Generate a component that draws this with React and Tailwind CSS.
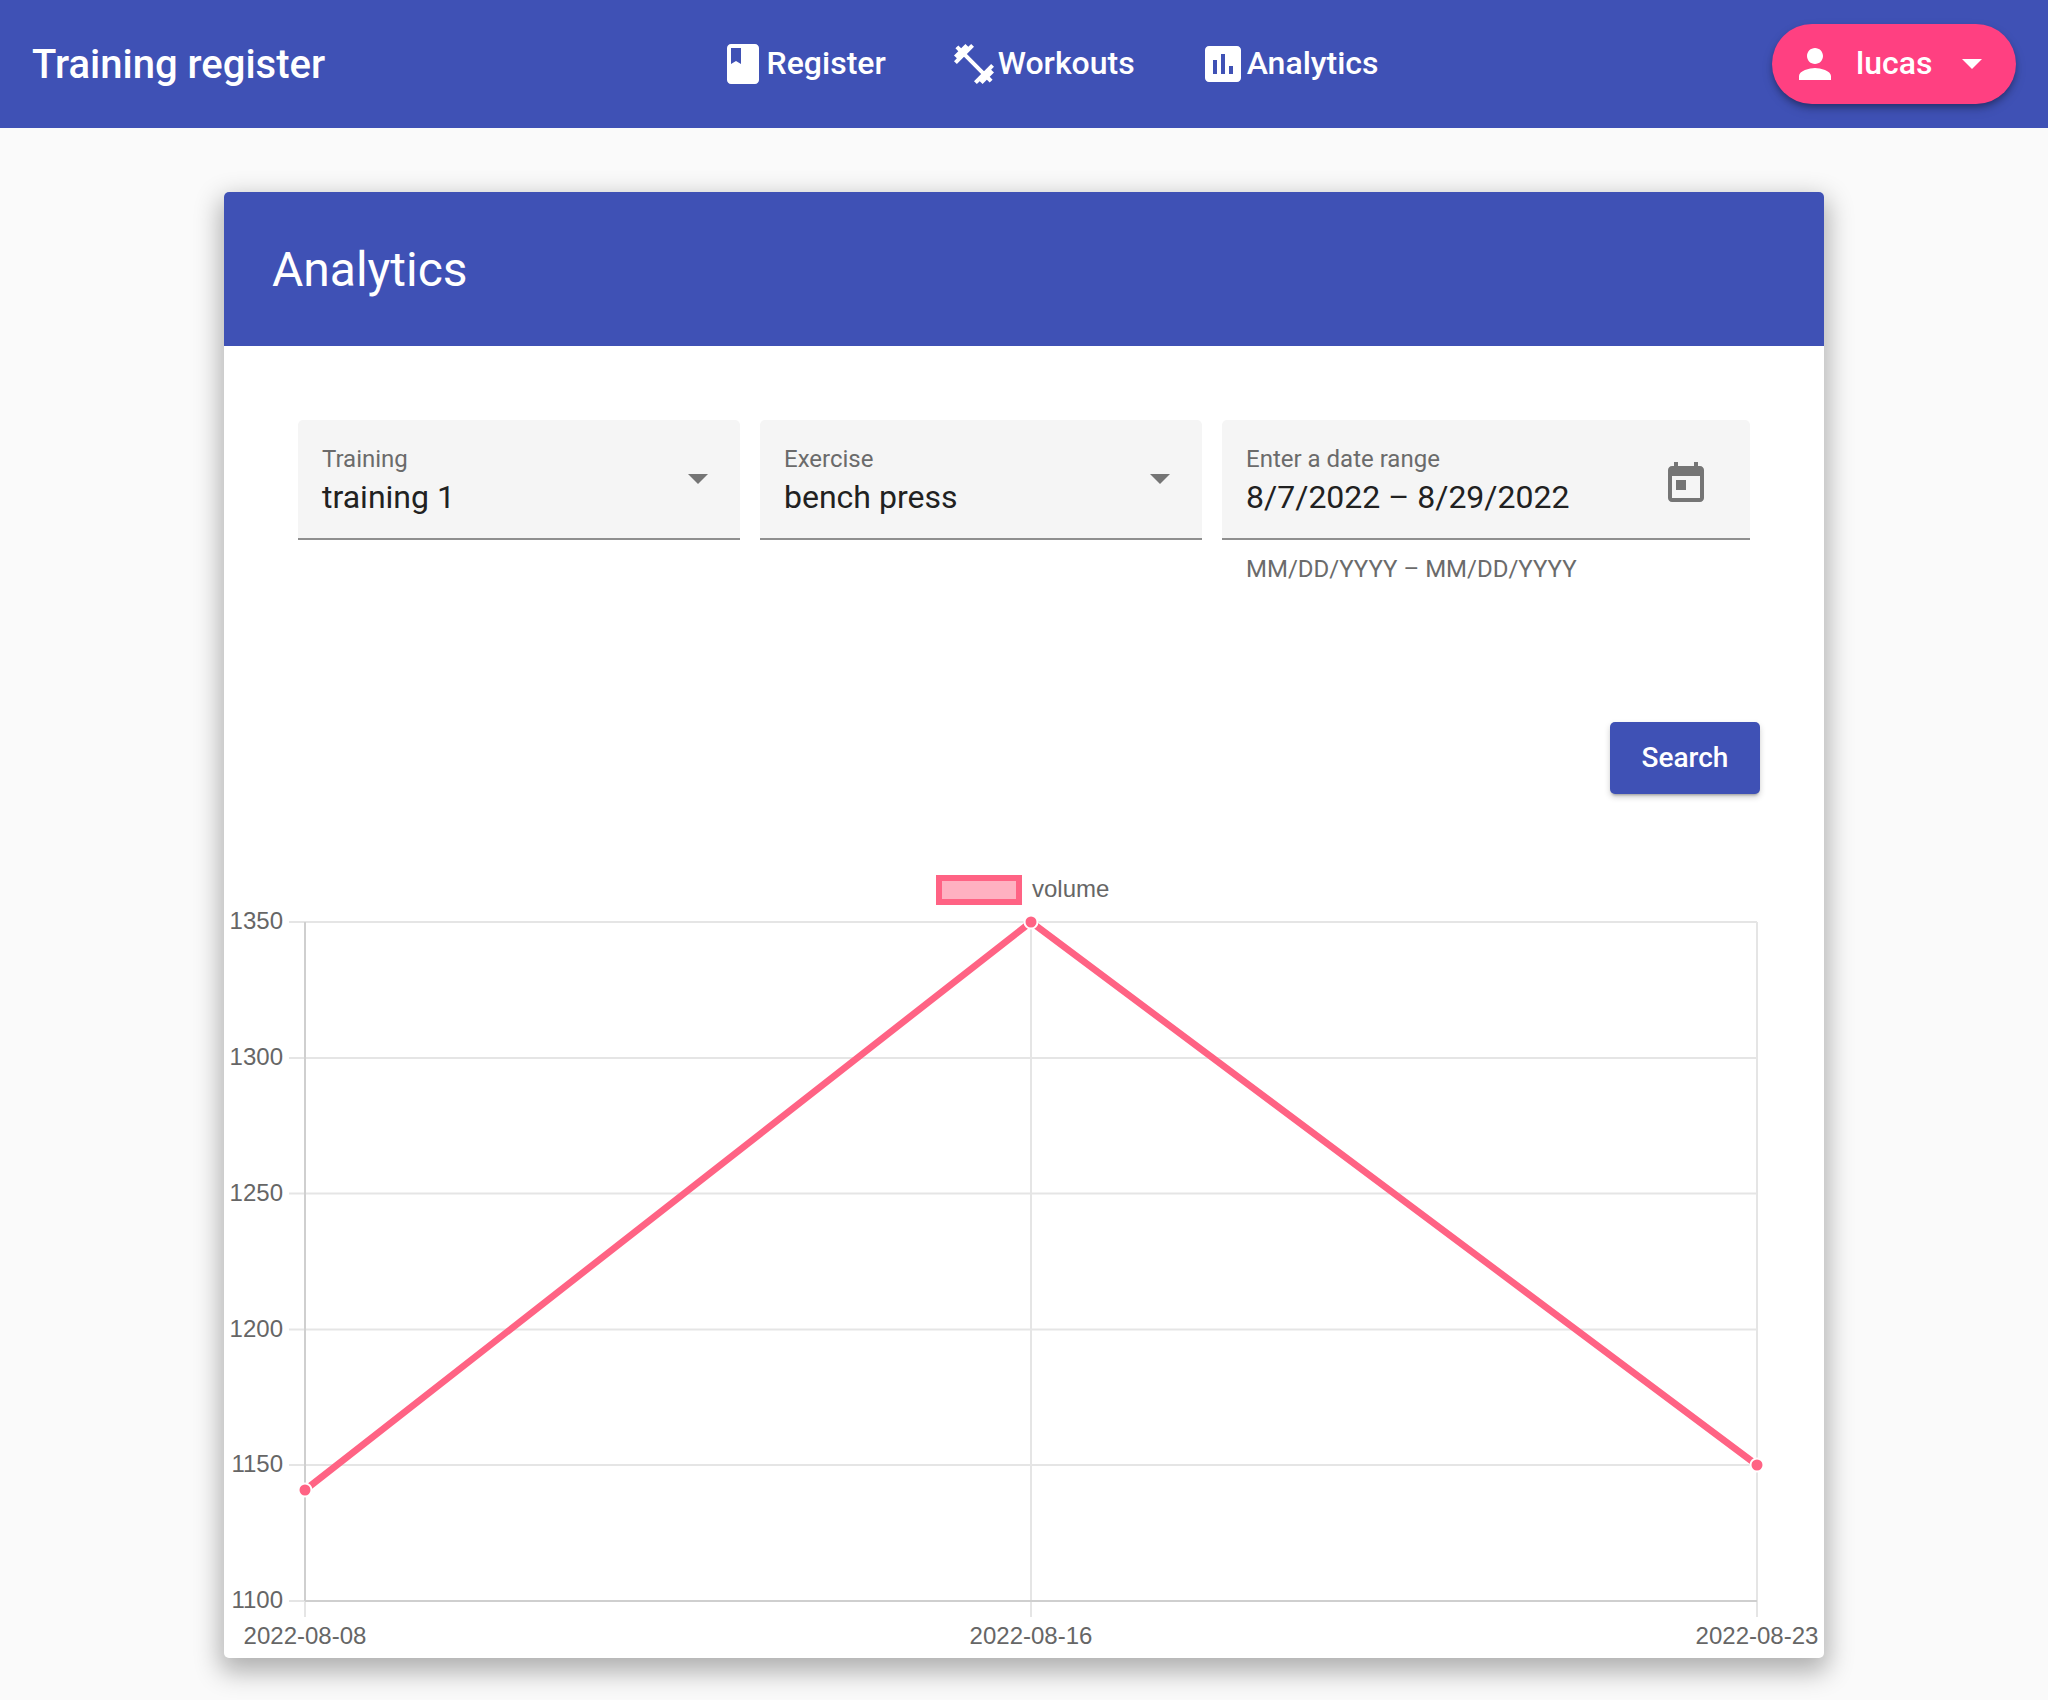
import React from 'react';

const BOOK = 'M18 2H6c-1.1 0-2 .9-2 2v16c0 1.1.9 2 2 2h12c1.1 0 2-.9 2-2V4c0-1.1-.9-2-2-2zM6 4h5v8l-2.5-1.5L6 12V4z';
const DUMBBELL = 'M20.57 14.86L22 13.43 20.57 12 17 15.57 8.43 7 12 3.43 10.57 2 9.14 3.43 7.71 2 5.57 4.14 4.14 2.71 2.71 4.14l1.43 1.43L2 7.71l1.43 1.43L2 10.57 3.43 12 7 8.43 15.57 17 12 20.57 13.43 22l1.43-1.43L16.29 22l2.14-2.14 1.43 1.43 1.43-1.43-1.43-1.43L22 16.29z';
const CHART = 'M19 3H5c-1.1 0-2 .9-2 2v14c0 1.1.9 2 2 2h14c1.1 0 2-.9 2-2V5c0-1.1-.9-2-2-2zM9 17H7v-7h2v7zm4 0h-2V7h2v10zm4 0h-2v-4h2v4z';
const PERSON = 'M12 12c2.21 0 4-1.79 4-4s-1.79-4-4-4-4 1.79-4 4 1.79 4 4 4zm0 2c-2.67 0-8 1.34-8 4v2h16v-2c0-2.66-5.33-4-8-4z';
const EVENT = 'M19 3h-1V1h-2v2H8V1H6v2H5c-1.11 0-1.99.9-1.99 2L3 19c0 1.1.89 2 2 2h14c1.1 0 2-.9 2-2V5c0-1.1-.9-2-2-2zm0 16H5V8h14v11zM7 10h5v5H7z';

function Icon({ d, className }) {
  return (
    <svg viewBox="0 0 24 24" fill="currentColor" className={className}>
      <path d={d} />
    </svg>
  );
}

function NavItem({ icon, label }) {
  return (
    <div className="flex items-center text-[32px] font-medium text-white">
      <Icon d={icon} className="h-12 w-12 shrink-0" />
      <span className="-mt-[2px]">{label}</span>
    </div>
  );
}

function SelectField({ label, value }) {
  return (
    <div className="flex h-[120px] w-[442px] items-center justify-between rounded-t-[5px] border-b-2 border-[#8f8f8f] bg-[#f5f5f5] pl-6 pr-8">
      <div className="mt-[3px] flex flex-col">
        <span className="text-[24px] leading-[28px] text-[#6b6b6b]">{label}</span>
        <span className="mt-[5px] text-[32px] leading-[38px] text-[#212121]">{value}</span>
      </div>
      <div className="h-0 w-0 border-x-[10px] border-t-[10px] border-x-transparent border-t-[#757575]" />
    </div>
  );
}

const X_AXIS = [
  { x: 305, label: '2022-08-08' },
  { x: 1031, label: '2022-08-16' },
  { x: 1757, label: '2022-08-23' },
];
const Y_AXIS = [
  { y: 922, label: '1350' },
  { y: 1058, label: '1300' },
  { y: 1193.5, label: '1250' },
  { y: 1329.5, label: '1200' },
  { y: 1465, label: '1150' },
  { y: 1601, label: '1100' },
];
const POINTS = [
  [305, 1490],
  [1031, 922],
  [1757, 1465],
];

function VolumeChart() {
  return (
    <svg viewBox="224 866 1600 792" className="block h-[792px] w-[1600px] font-['Liberation_Sans',sans-serif]">
      {Y_AXIS.map((t) => (
        <g key={t.label}>
          <line x1="289" x2="1757" y1={t.y} y2={t.y} stroke="#e5e5e5" strokeWidth="2" />
          <text x="283" y={t.y + 7} textAnchor="end" fontSize="24" fill="#666666">{t.label}</text>
        </g>
      ))}
      {X_AXIS.map((t) => (
        <g key={t.label}>
          <line x1={t.x} x2={t.x} y1="922" y2="1617" stroke="#e5e5e5" strokeWidth="2" />
          <text x={t.x} y="1644" textAnchor="middle" fontSize="24" fill="#666666">{t.label}</text>
        </g>
      ))}
      <line x1="305" x2="305" y1="922" y2="1601" stroke="#cfcfcf" strokeWidth="2" />
      <line x1="305" x2="1757" y1="1601" y2="1601" stroke="#cfcfcf" strokeWidth="2" />

      <rect x="939" y="878" width="80" height="24" fill="#ffb1c1" stroke="#ff6384" strokeWidth="6" />
      <text x="1032" y="897" fontSize="24" fill="#666666">volume</text>

      <polyline points={POINTS.map((p) => p.join(',')).join(' ')} fill="none" stroke="#ff6384" strokeWidth="6.67" />
      {POINTS.map((p) => (
        <circle key={p[0]} cx={p[0]} cy={p[1]} r="6.5" fill="#ff6384" stroke="#ffffff" strokeWidth="2" />
      ))}
    </svg>
  );
}

export default function App() {
  return (
    <div className="min-h-[1700px] bg-[#fafafa] font-['Roboto',sans-serif]">
      {/* Toolbar */}
      <header className="flex h-32 items-center justify-between bg-[#3f51b5] pl-8 pr-8">
        <h1 className="mt-[2px] text-[40px] font-medium text-white">Training register</h1>
        <nav className="flex items-center gap-16">
          <NavItem icon={BOOK} label="Register" />
          <NavItem icon={DUMBBELL} label="Workouts" />
          <NavItem icon={CHART} label="Analytics" />
        </nav>
        <button className="flex h-20 w-[244px] items-center rounded-full bg-[#ff4081] pl-[19px] text-[32px] font-medium text-white shadow-[0_4px_6px_-1px_rgba(0,0,0,0.3),0_5px_12px_rgba(0,0,0,0.14)]">
          <Icon d={PERSON} className="h-12 w-12 shrink-0" />
          <span className="-mt-[2px] ml-[17px]">lucas</span>
          <span className="ml-[30px] h-0 w-0 border-x-[10px] border-t-[10px] border-x-transparent border-t-white" />
        </button>
      </header>

      {/* Card */}
      <main className="mx-auto mt-16 w-[1600px] rounded-[5px] bg-white shadow-[0_10px_26px_4px_rgba(0,0,0,0.3)]">
        <div className="flex h-[154px] items-center rounded-t-[5px] bg-[#3f51b5] pl-12">
          <h2 className="mt-[2px] text-[48px] font-normal text-white">Analytics</h2>
        </div>

        <div className="px-[74px] pt-[74px]">
          <div className="flex gap-5">
            <SelectField label="Training" value="training 1" />
            <SelectField label="Exercise" value="bench press" />
            <div className="flex-1">
              <div className="flex h-[120px] items-center justify-between rounded-t-[5px] border-b-2 border-[#8f8f8f] bg-[#f5f5f5] pl-6 pr-[40px]">
                <div className="mt-[3px] flex flex-col">
                  <span className="text-[24px] leading-[28px] text-[#6b6b6b]">Enter a date range</span>
                  <span className="mt-[5px] text-[32px] leading-[38px] text-[#212121]">8/7/2022 – 8/29/2022</span>
                </div>
                <Icon d={EVENT} className="mt-[10px] h-12 w-12 text-[#757575]" />
              </div>
              <p className="mt-4 h-6 pl-6 text-[24px] leading-[26px] text-[#6b6b6b]">MM/DD/YYYY – MM/DD/YYYY</p>
            </div>
          </div>
        </div>

        <div className="mt-[142px] flex justify-end pr-[64px]">
          <button className="h-[72px] w-[150px] rounded-[5px] bg-[#3f51b5] text-[28px] font-medium text-white shadow-[0_3px_3px_-2px_rgba(0,0,0,0.3),0_3px_6px_rgba(0,0,0,0.18)]">
            Search
          </button>
        </div>

        <div className="mt-[72px]">
          <VolumeChart />
        </div>
      </main>
    </div>
  );
}
